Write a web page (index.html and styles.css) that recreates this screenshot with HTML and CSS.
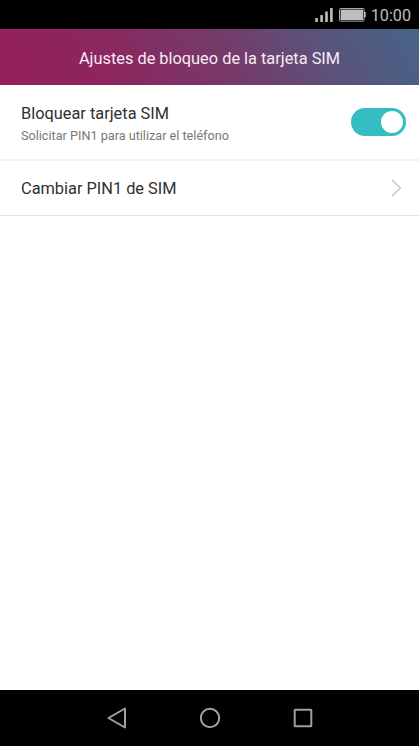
FILE: index.html
```
<!DOCTYPE html>
<html lang="es">
<head>
<meta charset="UTF-8">
<meta name="viewport" content="width=device-width, initial-scale=1.0">
<title>Ajustes de bloqueo de la tarjeta SIM</title>
<link rel="stylesheet" href="styles.css">
</head>
<body>
<div class="screen">
    <div class="status-bar">
        <svg class="signal" width="18" height="14" viewBox="0 0 18 14">
            <rect x="0.3" y="10" width="2.6" height="4" rx="0.5"/>
            <rect x="5.3" y="7" width="2.6" height="7" rx="0.5"/>
            <rect x="10.2" y="3.4" width="2.6" height="10.6" rx="0.5"/>
            <rect x="15.1" y="0" width="2.6" height="14" rx="0.5"/>
        </svg>
        <svg class="battery" width="27" height="14" viewBox="0 0 27 14">
            <rect class="battery-case" x="0.5" y="0.5" width="24.6" height="12.6" rx="1"/>
            <rect x="1.6" y="1.6" width="22.4" height="10.4"/>
            <rect x="25" y="4" width="1.7" height="5.4"/>
        </svg>
        <span class="clock">10:00</span>
    </div>

    <header class="header">
        <h1>Ajustes de bloqueo de la tarjeta SIM</h1>
    </header>

    <main class="settings">
        <div class="row row-lock">
            <div class="row-text">
                <div class="row-title">Bloquear tarjeta SIM</div>
                <div class="row-summary">Solicitar PIN1 para utilizar el teléfono</div>
            </div>
            <div class="switch"><div class="switch-knob"></div></div>
        </div>
        <div class="row row-change">
            <div class="row-title">Cambiar PIN1 de SIM</div>
            <svg class="chevron" width="11" height="18" viewBox="0 0 11 18">
                <path d="M1 1 L9.5 9 L1 17"/>
            </svg>
        </div>
    </main>

    <nav class="nav-bar">
        <svg width="24" height="24" viewBox="0 0 24 24"><path d="M3.5 12 L20 2.5 V21.5 Z"/></svg>
        <svg width="24" height="24" viewBox="0 0 24 24"><circle cx="12" cy="12" r="9.2"/></svg>
        <svg width="24" height="24" viewBox="0 0 24 24"><rect x="3.7" y="3.7" width="16.6" height="16.6" rx="0.5"/></svg>
    </nav>
</div>
</body>
</html>
```
FILE: styles.css
```
body {
    margin: 0;
    background-color: #fff;
    font-family: Roboto, sans-serif;
}

.screen {
    display: flex;
    flex-direction: column;
    height: 100vh;
}

/* Status bar */
.status-bar {
    display: flex;
    justify-content: flex-end;
    align-items: center;
    height: 29px;
    padding-right: 8px;
    background-color: #000;
    color: #bdbdbd;
    fill: #bdbdbd;
}

.signal {
    margin-right: 6px;
}

.battery {
    margin-right: 5px;
}

.battery-case {
    fill: none;
    stroke: #a8a8a8;
}

.clock {
    padding-top: 2px;
    font-size: 16.2px;
    line-height: 27px;
}

/* Header */
.header {
    display: flex;
    justify-content: center;
    align-items: center;
    box-sizing: border-box;
    height: 56px;
    padding-top: 4px;
    background: linear-gradient(60deg, #951f5b 0%, #8c265e 25%, #743b69 55%, #5b527a 75%, #466488 100%);
}

h1 {
    margin: 0;
    color: #f8eaf4;
    font-size: 16.35px;
    font-weight: normal;
    line-height: 20px;
}

/* Settings list */
.settings {
    flex: 1;
}

.row {
    display: flex;
    justify-content: space-between;
    align-items: center;
    box-sizing: border-box;
    padding-left: 21px;
}

.row-lock {
    height: 76px;
    padding-right: 13px;
    border-bottom: 2px solid #f1f1f1;
}

.row-text {
    padding-top: 6px;
}

.row-change {
    height: 55px;
    padding-right: 17px;
    border-bottom: 1px solid #e2e2e2;
}

.row-change .row-title {
    padding-top: 2px;
}

.row-title {
    color: #303030;
    font-size: 16.35px;
    line-height: 22px;
}

.row-summary {
    color: #777;
    font-size: 12.65px;
    line-height: 22px;
}

.switch {
    display: flex;
    justify-content: flex-end;
    align-items: center;
    box-sizing: border-box;
    width: 55px;
    height: 28px;
    padding-right: 3px;
    border-radius: 14px;
    background-color: #34bec4;
}

.switch-knob {
    width: 22px;
    height: 22px;
    border-radius: 50%;
    background-color: #fff;
}

.chevron {
    fill: none;
    stroke: #bdbdbd;
    stroke-width: 1.1;
}

/* Navigation bar */
.nav-bar {
    display: flex;
    justify-content: center;
    align-items: center;
    gap: 69px;
    height: 56px;
    background-color: #000;
    fill: none;
    stroke: #a0a0a0;
    stroke-width: 2;
    stroke-linejoin: round;
}
```
